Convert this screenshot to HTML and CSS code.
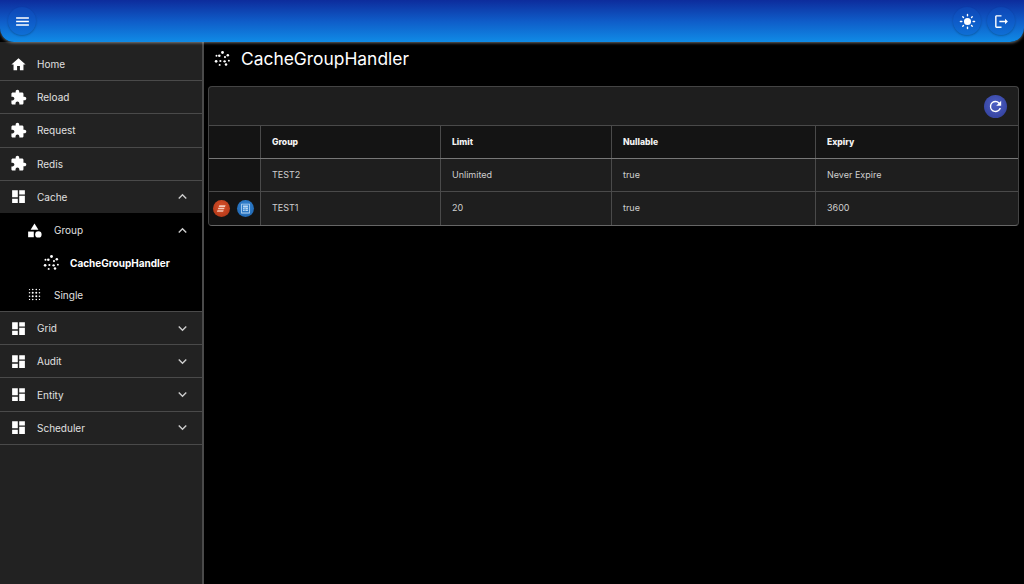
FILE: index.html
```html
<!DOCTYPE html>
<html lang="en">
<head>
  <meta charset="UTF-8">
  <title>CacheGroupHandler</title>
  <link rel="stylesheet" href="styles.css">
</head>
<body>
  <svg class="sprites" width="0" height="0">
    <symbol id="i-home" viewBox="0 0 24 24"><path d="M10 20v-6h4v6h5v-8h3L12 3 2 12h3v8z"/></symbol>
    <symbol id="i-puzzle" viewBox="0 0 24 24"><path d="M20.5 11H19V7c0-1.1-.9-2-2-2h-4V3.5C13 2.12 11.88 1 10.500 1S8 2.120 8 3.500V5H4c-1.100 0-1.990.9-1.990 2v3.800H3.500c1.490 0 2.700 1.210 2.700 2.700s-1.210 2.700-2.700 2.700H2V20c0 1.100.9 2 2 2h3.800v-1.500c0-1.490 1.210-2.700 2.700-2.700s2.700 1.210 2.700 2.700V22H17c1.100 0 2-.9 2-2v-4h1.500c1.380 0 2.500-1.120 2.500-2.500S21.880 11 20.500 11z"/></symbol>
    <symbol id="i-dash" viewBox="0 0 24 24"><path d="M3 3h8v10H3zM13 3h8v6h-8zM13 11h8v10h-8zM3 15h8v6H3z"/></symbol>
    <symbol id="i-up" viewBox="0 0 24 24"><path d="M7.410 15.410 12 10.830l4.590 4.580L18 14l-6-6-6 6z"/></symbol>
    <symbol id="i-down" viewBox="0 0 24 24"><path d="M7.410 8.590 12 13.170l4.590-4.580L18 10l-6 6-6-6z"/></symbol>
    <symbol id="i-category" viewBox="0 0 24 24"><path d="m12 2-5.500 9h11z"/><circle cx="17.500" cy="17.500" r="4.500"/><path d="M3 13.500h8v8H3z"/></symbol>
    <symbol id="i-spin" viewBox="0 0 24 24"><circle cx="12" cy="3.500" r="2"/><circle cx="19.500" cy="7.500" r="1.800"/><circle cx="21" cy="15" r="1.400"/><circle cx="17" cy="20.500" r="1.800"/><circle cx="8" cy="21" r="1.400"/><circle cx="3" cy="16" r="1.900"/><circle cx="3.500" cy="8" r="1.400"/><circle cx="7.500" cy="8" r="1.800"/><circle cx="15.500" cy="10" r="1.500"/><circle cx="15" cy="16" r="1.700"/><circle cx="9" cy="15.500" r="1.500"/></symbol>
    <symbol id="i-grain" viewBox="0 0 24 24"><circle cx="5" cy="5" r=".9"/><circle cx="9.500" cy="5" r="1.100"/><circle cx="14.500" cy="5" r="1.100"/><circle cx="19" cy="5" r=".9"/><circle cx="5" cy="9.500" r="1.100"/><circle cx="9.500" cy="9.500" r="1.400"/><circle cx="14.500" cy="9.500" r="1.400"/><circle cx="19" cy="9.500" r="1.100"/><circle cx="5" cy="14.500" r="1.100"/><circle cx="9.500" cy="14.500" r="1.400"/><circle cx="14.500" cy="14.500" r="1.400"/><circle cx="19" cy="14.500" r="1.100"/><circle cx="5" cy="19" r=".9"/><circle cx="9.500" cy="19" r="1.100"/><circle cx="14.500" cy="19" r="1.100"/><circle cx="19" cy="19" r=".9"/></symbol>
  </svg>

  <header class="topbar">
    <button class="round-btn">
      <svg viewBox="0 0 24 24"><path d="M3 18h18v-2H3zM3 13h18v-2H3zM3 6v2h18V6z"/></svg>
    </button>
    <div class="topbar-right">
      <button class="round-btn">
        <svg viewBox="0 0 24 24"><path d="M12 7a5 5 0 1 0 0 10 5 5 0 0 0 0-10zM2 13h2a1 1 0 0 0 0-2H2a1 1 0 0 0 0 2zm18 0h2a1 1 0 0 0 0-2h-2a1 1 0 0 0 0 2zM11 2v2a1 1 0 0 0 2 0V2a1 1 0 0 0-2 0zm0 18v2a1 1 0 0 0 2 0v-2a1 1 0 0 0-2 0zM5.990 4.580a1 1 0 0 0-1.410 1.410l1.060 1.060a1 1 0 0 0 1.410-1.410zm12.370 12.370a1 1 0 0 0-1.410 1.410l1.060 1.060a1 1 0 0 0 1.410-1.410zm1.060-10.960a1 1 0 0 0-1.410-1.410l-1.060 1.060a1 1 0 0 0 1.410 1.410zM7.050 18.360a1 1 0 0 0-1.410-1.410l-1.060 1.060a1 1 0 0 0 1.410 1.410z"/></svg>
      </button>
      <button class="round-btn">
        <svg viewBox="0 0 24 24"><path d="M5 5h7V3H5c-1.100 0-2 .9-2 2v14c0 1.100.9 2 2 2h7v-2H5zm16 7-4-4v3H9v2h8v3z"/></svg>
      </button>
    </div>
  </header>

  <div class="layout">
    <nav class="sidebar">
      <a class="nav-item"><svg class="nav-icon"><use href="#i-home"/></svg>Home</a>
      <a class="nav-item"><svg class="nav-icon"><use href="#i-puzzle"/></svg>Reload</a>
      <a class="nav-item"><svg class="nav-icon"><use href="#i-puzzle"/></svg>Request</a>
      <a class="nav-item"><svg class="nav-icon"><use href="#i-puzzle"/></svg>Redis</a>
      <a class="nav-item open"><svg class="nav-icon"><use href="#i-dash"/></svg>Cache<svg class="chevron"><use href="#i-up"/></svg></a>
      <div class="submenu">
        <a class="sub-item"><svg class="nav-icon"><use href="#i-category"/></svg>Group<svg class="chevron"><use href="#i-up"/></svg></a>
        <a class="sub-item leaf"><svg class="nav-icon"><use href="#i-spin"/></svg>CacheGroupHandler</a>
        <a class="sub-item"><svg class="nav-icon"><use href="#i-grain"/></svg>Single</a>
      </div>
      <a class="nav-item"><svg class="nav-icon"><use href="#i-dash"/></svg>Grid<svg class="chevron"><use href="#i-down"/></svg></a>
      <a class="nav-item"><svg class="nav-icon"><use href="#i-dash"/></svg>Audit<svg class="chevron"><use href="#i-down"/></svg></a>
      <a class="nav-item"><svg class="nav-icon"><use href="#i-dash"/></svg>Entity<svg class="chevron"><use href="#i-down"/></svg></a>
      <a class="nav-item"><svg class="nav-icon"><use href="#i-dash"/></svg>Scheduler<svg class="chevron"><use href="#i-down"/></svg></a>
    </nav>

    <main class="content">
      <h1 class="page-title"><svg class="nav-icon"><use href="#i-spin"/></svg>CacheGroupHandler</h1>

      <section class="card">
        <div class="toolbar">
          <button class="refresh-btn">
            <svg viewBox="0 0 24 24"><path d="M17.650 6.350A7.960 7.960 0 0 0 12 4a8 8 0 1 0 7.730 10h-2.080A6 6 0 1 1 12 6c1.660 0 3.140.69 4.220 1.780L13 11h7V4z"/></svg>
          </button>
        </div>
        <table class="grid">
          <thead>
            <tr><th class="col-actions"></th><th class="col-group">Group</th><th class="col-limit">Limit</th><th class="col-nullable">Nullable</th><th>Expiry</th></tr>
          </thead>
          <tbody>
            <tr><td></td><td>TEST2</td><td>Unlimited</td><td>true</td><td>Never Expire</td></tr>
            <tr>
              <td class="actions">
                <span class="action red"><svg viewBox="0 0 24 24"><path d="M8 6h11.500l-1.200 3H6.800zM6.300 10.500h11.500l-1.200 3H5.100zM4.600 15h11.500l-1.200 3H3.400z"/></svg></span>
                <span class="action blue"><svg viewBox="0 0 24 24"><path d="M4 3h16v18H4zm1.500 1.500v15h13v-15zM7.500 6.500h9V10h-9zM7.500 11.300h3v2h-3zM11.800 11.300h4.700v2h-4.700zM7.500 14.500h3v2h-3zM11.800 14.500h4.700v2h-4.700z" fill-rule="evenodd"/></svg></span>
              </td>
              <td>TEST1</td><td>20</td><td>true</td><td>3600</td>
            </tr>
          </tbody>
        </table>
      </section>
    </main>
  </div>
</body>
</html>
```

FILE: styles.css
```css
* {
  box-sizing: border-box;
}
html, body {
  height: 100%;
}
body {
  margin: 0;
  background: #000;
  color: #e6e6e6;
  font-family: "Inter", "Liberation Sans", sans-serif;
  font-size: 10px;
  display: flex;
  flex-direction: column;
  overflow: hidden;
}
.sprites {
  display: none;
}
svg {
  fill: currentColor;
}

/* top bar */
.topbar {
  height: 42px;
  flex: none;
  display: flex;
  align-items: center;
  justify-content: space-between;
  padding: 0 9px 0 8px;
  background: linear-gradient(180deg, #0d2c9c 0%, #0f5cc8 50%, #108be6 100%);
  border-radius: 0 0 14px 14px;
  box-shadow: 0 1px 3px rgba(255, 255, 255, 0.4);
  position: relative;
  z-index: 2;
}
.topbar-right {
  display: flex;
  gap: 6px;
}
.round-btn {
  width: 28px;
  height: 28px;
  padding: 5.500px;
  border: none;
  border-radius: 50%;
  color: #fff;
  background: rgba(15, 90, 200, 0.35);
  box-shadow: 0 1px 2px rgba(0, 0, 0, 0.25);
}
.round-btn svg {
  display: block;
  width: 17px;
  height: 17px;
}

/* sidebar */
.layout {
  flex: 1;
  display: flex;
  min-height: 0;
}
.sidebar {
  width: 204px;
  flex: none;
  padding-top: 6px;
  background: #222;
  border-right: 2px solid #4a4a4a;
}
.nav-item, .sub-item {
  display: flex;
  align-items: center;
  font-size: 10px;
  color: #e0e0e0;
}
.nav-item {
  height: 33.200px;
  padding: 0 11px 0 10px;
  border-bottom: 1px solid #4a4a4a;
}
.nav-item.open {
  border-bottom-color: #000;
}
.nav-icon {
  width: 17px;
  height: 17px;
  flex: none;
  margin-right: 10px;
  color: #fff;
}
.chevron {
  width: 17px;
  height: 17px;
  margin-left: auto;
  color: #ccc;
}
.submenu {
  background: #000;
  border-bottom: 1px solid #4a4a4a;
}
.sub-item {
  height: 32.400px;
  padding: 0 11px 0 26px;
}
.sub-item .nav-icon {
  margin-right: 11px;
}
.sub-item.leaf {
  padding-left: 43px;
  font-weight: 700;
  color: #fff;
}
.sub-item.leaf .nav-icon {
  margin-right: 10px;
}

/* main area */
.content {
  flex: 1;
  min-width: 0;
  padding: 0 5px 0 4px;
}
.page-title {
  height: 33px;
  margin: 0 0 11px;
  display: flex;
  align-items: center;
  padding-left: 6px;
  font-size: 17.400px;
  font-weight: 400;
  color: #fff;
}
.page-title .nav-icon {
  margin-right: 10px;
}
.card {
  background: #1e1e1e;
  border: 1px solid #444;
  border-bottom-color: #666;
  border-radius: 4px;
  overflow: hidden;
}
.toolbar {
  height: 38px;
  display: flex;
  align-items: center;
  justify-content: flex-end;
  padding-right: 11px;
}
.refresh-btn {
  width: 23px;
  height: 23px;
  padding: 3px;
  border: none;
  border-radius: 50%;
  color: #fff;
  background: radial-gradient(circle at 50% 40%, #4d5fc4, #2f3c96);
}
.refresh-btn svg {
  display: block;
  width: 17px;
  height: 17px;
}
.grid {
  width: 100%;
  border-collapse: collapse;
  table-layout: fixed;
}
.grid th, .grid td {
  height: 33px;
  padding: 0 11px 0 11.500px;
  text-align: left;
  border: 1px solid #4a4a4a;
  border-width: 1px 0 0 1px;
  font-size: 9px;
}
.grid td {
  padding-bottom: 2px;
}
.grid th:first-child, .grid td:first-child {
  border-left: none;
}
.grid th {
  background: #141414;
  color: #f2f2f2;
  font-size: 8.600px;
  font-weight: 800;
  border-bottom: 1px solid #777;
}
.grid td {
  color: #cfcfcf;
}
.grid td:first-child {
  background: #141414;
}
.col-actions {
  width: 51px;
}
.col-group {
  width: 180px;
}
.col-limit {
  width: 171px;
}
.col-nullable {
  width: 204px;
}
.grid td.actions {
  padding: 0 0 0 4px;
}
.actions {
  white-space: nowrap;
}
.action {
  display: inline-block;
  width: 17px;
  height: 17px;
  padding: 2px;
  margin-right: 4px;
  border-radius: 50%;
  vertical-align: middle;
  color: #f4c9b8;
}
.action svg {
  display: block;
  width: 13px;
  height: 13px;
}
.action.red {
  background: radial-gradient(circle at 50% 40%, #d9502a, #a93314);
}
.action.blue {
  background: radial-gradient(circle at 50% 40%, #3587d6, #1b5fa8);
  color: #b9d8f4;
}
```
